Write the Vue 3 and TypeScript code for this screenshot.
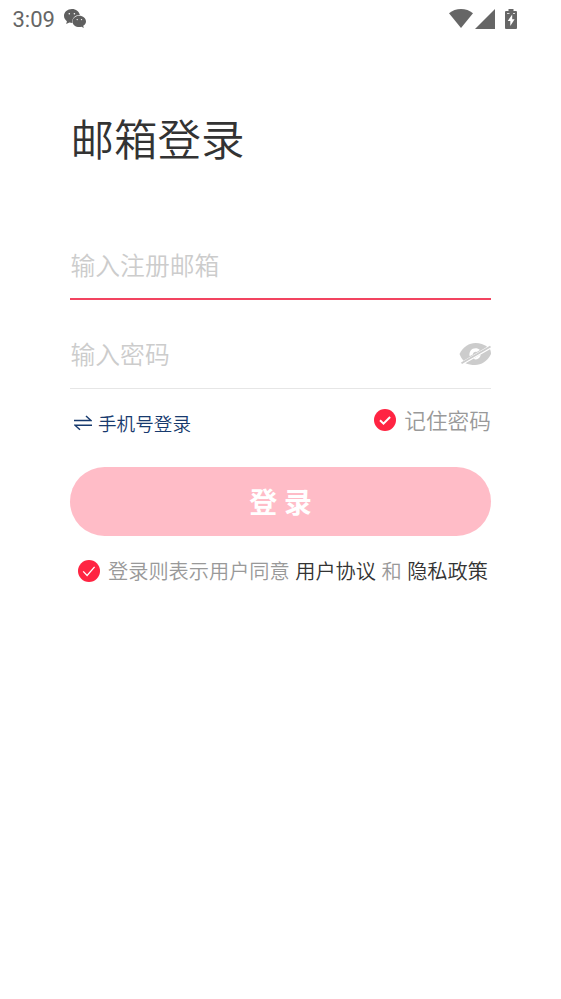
<template>
  <div class="page">
    <header class="status-bar">
      <div class="status-left">
        <span class="clock">3:09</span>
        <svg class="wechat-icon" viewBox="0 0 22 19">
          <path
            d="M8 0C3.400 0 0 3 0 6.800c0 2.300 1.100 4.100 2.900 5.400L2.200 15l3.200-1.500c1 .3 2 .4 3 .4C7.600 9.500 11 6 15.900 6C15 2.500 12 0 8 0z"
            fill="#5f5f5f"
          />
          <path
            d="M15.300 6.700c-3.800 0-6.800 2.500-6.800 5.700s3 5.700 6.800 5.700c.8 0 1.500-.1 2.200-.3l2.300 1.200-.6-2.200c1.700-1 2.800-2.600 2.800-4.400 0-3.200-3-5.700-6.700-5.700z"
            fill="#5f5f5f"
          />
          <g fill="#fff">
            <circle cx="5.300" cy="4.800" r=".8" />
            <circle cx="10.400" cy="4.800" r=".8" />
            <circle cx="13.200" cy="10.600" r=".7" />
            <circle cx="17.500" cy="10.600" r=".7" />
          </g>
        </svg>
      </div>
      <div class="status-right">
        <svg class="wifi-icon" viewBox="0 0 24 19">
          <path d="M0 4.300C6.500-1.400 17.500-1.400 24 4.300L12 19z" fill="#666" />
        </svg>
        <svg class="signal-icon" viewBox="0 0 20 20">
          <path d="M20 0v20H0z" fill="#666" />
        </svg>
        <svg class="battery-icon" viewBox="0 0 12 20">
          <path
            d="M3.500 0h5v2H11a1 1 0 0 1 1 1v16a1 1 0 0 1-1 1H1a1 1 0 0 1-1-1V3a1 1 0 0 1 1-1h2.500z"
            fill="#666"
          />
          <path d="M7.200 5.500L2.700 12h2.600v5L9.600 10.200H7.200zM2 4.200h2.500v.9H2zM8 4.200h2v.9H8z" fill="#fff" />
        </svg>
      </div>
    </header>

    <main class="login">
      <h1 class="title">邮箱登录</h1>

      <div class="field" :class="{ active: activeField === 'email' }">
        <input v-model="email" type="text" placeholder="输入注册邮箱" @focus="activeField = 'email'" />
      </div>

      <div class="field password" :class="{ active: activeField === 'password' }">
        <input
          v-model="password"
          :type="showPassword ? 'text' : 'password'"
          placeholder="输入密码"
          @focus="activeField = 'password'"
        />
        <svg class="eye-icon" viewBox="0 0 32 24" @click="showPassword = !showPassword">
          <path
            d="M.5 12C4.500 4.500 10 1 16.500 1c4.500 0 8.500 1.300 11.700 3.800L4.500 18.800C3 17 1.500 14.500.5 12z"
            fill="#ccc"
          />
          <path
            d="M6.500 21.200L31 7.200C31.700 8.500 32 10 32 12C28 19.500 22.500 23 16 23c-3.700 0-6.800-.6-9.500-1.800z"
            fill="#ccc"
          />
          <path
            d="M10.600 14.300C9.800 9.800 12.500 6.300 16.500 6.300c1.900 0 3.300.6 4.400 1.700l-3.200 1.900c-2.100-.5-3.700.8-3.900 2.600z"
            fill="#fff"
          />
          <path d="M14.500 16.800L21.800 12.600c-.5 3.900-4.300 6.200-7.300 4.200z" fill="#fff" />
          <path d="M2.500 21.300L31.500 4.500" stroke="#ccc" stroke-width="1.900" />
        </svg>
      </div>

      <div class="options">
        <a class="switch-link">
          <svg class="swap-icon" viewBox="0 0 18 16">
            <path d="M0 5.500h17L12 1M18 10.200H1l5 4.500" fill="none" stroke="#173a6e" stroke-width="1.500" />
          </svg>
          <span>手机号登录</span>
        </a>
        <div class="remember" @click="remember = !remember">
          <svg class="check-icon" viewBox="0 0 22 22">
            <circle cx="11" cy="11" r="11" :fill="remember ? '#ff2442' : '#ccc'" />
            <path d="M6 11.200l3.500 3.500 6.600-6.700" fill="none" stroke="#fff" stroke-width="2" />
          </svg>
          <span>记住密码</span>
        </div>
      </div>

      <button class="submit" type="button">登 录</button>

      <div class="agreement">
        <svg class="check-icon" viewBox="0 0 22 22" @click="agreed = !agreed">
          <circle cx="11" cy="11" r="11" :fill="agreed ? '#ff2442' : '#ccc'" />
          <path d="M5.200 11.400l3.900 4.100 7.500-8.700" fill="none" stroke="#fff" stroke-width="1.300" />
        </svg>
        <span>登录则表示用户同意</span>
        <a>用户协议</a>
        <span>和</span>
        <a>隐私政策</a>
      </div>
    </main>
  </div>
</template>

<script setup lang="ts">
import { ref } from 'vue'

const email = ref('')
const password = ref('')
const activeField = ref<'email' | 'password'>('email')
const showPassword = ref(false)
const remember = ref(true)
const agreed = ref(true)
</script>

<style>
body {
  margin: 0;
  background: #fff;
}
</style>

<style scoped>
.page {
  min-height: 999px;
  background: #fff;
  font-family: 'Noto Sans CJK SC', sans-serif;
  font-weight: 350;
  color: #333;
}

svg {
  display: block;
  flex: none;
}

.status-bar {
  height: 37px;
  padding: 0 44px 0 12.5px;
  display: flex;
  align-items: center;
  justify-content: space-between;
}

.status-left,
.status-right {
  display: flex;
  align-items: center;
}

.clock {
  font-family: Roboto, sans-serif;
  font-size: 22px;
  font-weight: 450;
  line-height: 36px;
  color: #666;
  padding-top: 2px;
}

.wechat-icon {
  width: 22px;
  height: 19px;
  margin-left: 9.5px;
}

.wifi-icon {
  width: 24px;
  height: 19px;
}

.signal-icon {
  width: 20px;
  height: 20px;
  margin-left: 2px;
}

.battery-icon {
  width: 12px;
  height: 20px;
  margin-left: 10px;
}

.login {
  padding: 69px 70px 0;
}

.title {
  margin: 0;
  padding-left: 0.5px;
  font-size: 43.5px;
  font-weight: 350;
  line-height: 64px;
}

.field {
  display: flex;
  align-items: center;
  box-sizing: border-box;
  height: 69px;
  border-bottom: 1px solid #e6e6e6;
}

.title + .field {
  margin-top: 61px;
}

.field.active {
  border-bottom: 2px solid #f24460;
}

.field.password {
  margin-top: 20px;
}

.field input {
  flex: 1;
  min-width: 0;
  padding: 0 0 2px 0.5px;
  border: 0;
  outline: none;
  background: transparent;
  font-family: inherit;
  font-size: 24.8px;
  font-weight: 350;
  line-height: 36px;
  color: #333;
}

.field input::placeholder {
  color: #ccc;
  opacity: 1;
}

.eye-icon {
  width: 32px;
  height: 24px;
}

.options {
  display: flex;
  justify-content: space-between;
  align-items: flex-start;
  height: 78px;
}

.switch-link {
  display: flex;
  align-items: center;
  gap: 6px;
  padding: 20px 0 0 4px;
  font-size: 18.6px;
  line-height: 28px;
  color: #173a6e;
}

.swap-icon {
  width: 18px;
  height: 16px;
}

.remember {
  display: flex;
  align-items: center;
  gap: 8px;
  padding-top: 15px;
  font-size: 21.7px;
  line-height: 32px;
  color: #999;
}

.check-icon {
  width: 22px;
  height: 22px;
}

.submit {
  display: block;
  width: 100%;
  height: 69px;
  padding: 0;
  border: 0;
  border-radius: 35px;
  background: #ffbcc7;
  color: #fff;
  font-family: inherit;
  font-size: 27.9px;
  font-weight: 700;
  line-height: 69px;
  word-spacing: 0.5px;
}

.agreement {
  display: flex;
  align-items: center;
  margin-top: 19px;
  padding-left: 8px;
  font-size: 20.2px;
  line-height: 32px;
  color: #999;
  white-space: nowrap;
}

.agreement .check-icon {
  margin-right: 8px;
}

.agreement a {
  margin: 0 5.5px;
  color: #333;
}
</style>
